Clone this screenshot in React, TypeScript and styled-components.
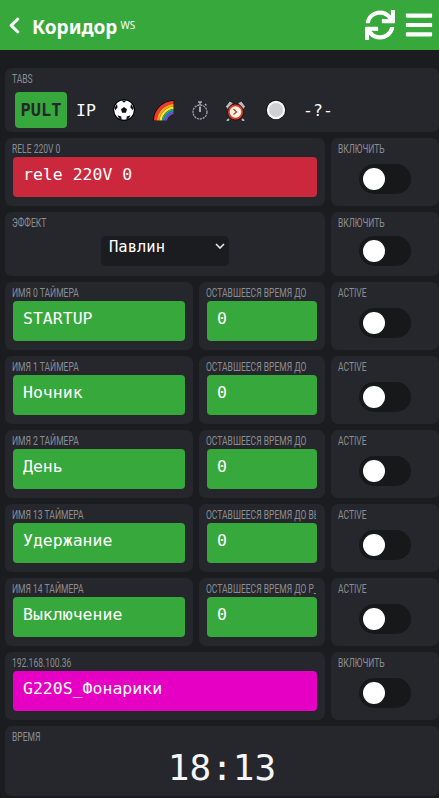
import React from "react";
import styled, { createGlobalStyle } from "styled-components";
import { FaChevronLeft, FaSync, FaBars } from "react-icons/fa";

const Global = createGlobalStyle`
  html, body { margin: 0; padding: 0; background: #1b1c20; overflow: hidden; }
  body { width: 439px; height: 798px; font-family: "Noto Sans", sans-serif; }
`;

const Page = styled.div`
  width: 439px;
  height: 798px;
  overflow: hidden;
`;

const Header = styled.header`
  height: 50px;
  background: #37a93c;
  display: flex;
  align-items: center;
  color: #fff;
  padding: 0 5px 0 5px;
`;

const Title = styled.h1`
  margin: 3px 0 0 8px;
  font-size: 19px;
  font-weight: 700;
  line-height: 26px;
`;

const Sup = styled.sup`
  display: inline-block;
  font-size: 10px;
  font-weight: 400;
  margin-left: 3px;
  vertical-align: 5px;
  line-height: 0;
`;

const HeaderIcons = styled.div`
  margin-left: auto;
  display: flex;
  align-items: center;
  gap: 9px;
`;

const Board = styled.main`
  display: grid;
  grid-template-columns: 188px 126px 108px;
  gap: 6px;
  padding: 18px 0 0 5px;
`;

const Card = styled.section<{ $span?: number; $h?: number }>`
  grid-column: span ${(p) => p.$span ?? 1};
  height: ${(p) => p.$h ?? 68}px;
  box-sizing: border-box;
  background: #26272c;
  border-radius: 7px;
  padding: 3px 8px 0;
  overflow: hidden;
`;

const Label = styled.div`
  font-family: "Roboto", sans-serif;
  font-size: 12px;
  line-height: 16px;
  height: 16px;
  color: #8b8d92;
  text-transform: uppercase;
  white-space: nowrap;
  margin-left: -1px;
  width: 140.8%;
  overflow: hidden;
  transform: scaleX(0.71);
  transform-origin: left center;
`;

const Value = styled.div<{ $bg: string }>`
  height: 40px;
  background: ${(p) => p.$bg};
  border-radius: 4px;
  font-family: "DejaVu Sans Mono", monospace;
  font-size: 16.5px;
  line-height: 35px;
  color: #fff;
  padding: 0 10px;
  white-space: pre;
`;

const Center = styled.div`
  display: flex;
  justify-content: center;
`;

const ToggleRow = styled(Center)<{ $top: number }>`
  padding-top: ${(p) => p.$top}px;
`;

const Track = styled.div`
  width: 52px;
  height: 30px;
  background: #17181a;
  border-radius: 15px;
  display: flex;
  align-items: center;
  padding-left: 4px;
  box-sizing: border-box;
`;

const Knob = styled.div`
  width: 22px;
  height: 22px;
  border-radius: 50%;
  background: #fff;
`;

const chevron =
  "data:image/svg+xml,%3Csvg xmlns='http://www.w3.org/2000/svg' width='10' height='6' viewBox='0 0 10 6'%3E%3Cpath d='M1 1l4 4 4-4' fill='none' stroke='%23e8e8e8' stroke-width='1.600'/%3E%3C/svg%3E";

const SelectBox = styled.select`
  appearance: none;
  width: 128px;
  height: 30px;
  margin-top: 5px;
  border: 0;
  border-radius: 5px;
  background: #1b1c20 url("${chevron}") no-repeat 114px 7px;
  color: #fff;
  font-family: "DejaVu Sans Mono", monospace;
  font-size: 15.5px;
  line-height: 20px;
  padding: 0 8px 9px;
  outline: none;
`;

const Tabs = styled.div`
  display: flex;
  height: 36px;
  margin: 5px 0 0 2px;
  align-items: center;
`;

const Tab = styled.div<{ $w: number; $active?: boolean }>`
  width: ${(p) => p.$w}px;
  height: 36px;
  display: flex;
  align-items: center;
  justify-content: center;
  border-radius: 4px;
  font-family: "DejaVu Sans Mono", monospace;
  font-size: ${(p) => (p.$active ? 17 : 16.5)}px;
  font-weight: ${(p) => (p.$active ? 700 : 400)};
  color: ${(p) => (p.$active ? "#26272c" : "#fff")};
  background: ${(p) => (p.$active ? "#37a93c" : "transparent")};
`;

const Clock = styled.div`
  font-family: "DejaVu Sans Mono", monospace;
  font-size: 36px;
  line-height: 44px;
  text-align: center;
  color: #f4f6f8;
  margin-top: 1px;
`;

const Toggle = ({ top = 7 }: { top?: number }) => (
  <ToggleRow $top={top}>
    <Track>
      <Knob />
    </Track>
  </ToggleRow>
);

const Ball = () => (
  <svg width="22" height="22" viewBox="0 0 22 22">
    <circle cx="11" cy="11" r="10.800" fill="#000" />
    <circle cx="11" cy="11" r="9.800" fill="#fff" />
    <path d="M11 8l3 2.200-1.100 3.600H9.100L8 10.200z" fill="#111" />
    <path d="M8.500 1.500h5L11 3.800zM1.700 8.500L4 5l.6 3.500-2.400 2.800zM20.300 8.500L18 5l-.6 3.500 2.400 2.800zM4.500 16.200l3.700 1.300.5 3-2.500-1zM17.500 16.200l-3.700 1.300-.5 3 2.500-1z" fill="#111" />
  </svg>
);

const Rainbow = () => (
  <svg width="21" height="21" viewBox="0 0 21 21">
    <path d="M0 21C0 9.500 9.500 0 21 0v10C15 10 10 15 10 21z" fill="#111" />
    <path d="M1 20.500C1 10 10 1 20.500 1v3C12 4 4 12 4 20.500z" fill="#ef3b2d" />
    <path d="M4 20.500C4 12 12 4 20.500 4v2.500C13.500 6.500 6.500 13.500 6.500 20.500z" fill="#f9a11b" />
    <path d="M6.500 20.500C6.500 13.500 13.500 6.500 20.500 6.500V9C15 9 9 15 9 20.500z" fill="#f7e03c" />
    <path d="M9 20.500C9 15 15 9 20.500 9v1.500C16 10.500 10.500 16 10.500 20.500z" fill="#3fb54a" />
    <path d="M10.500 20.500C10.500 16 16 10.500 20.500 10.500V12.500C17 12.500 12.500 17 12.500 20.500z" fill="#2a7de1" />
    <path d="M12.500 20.500C12.500 17 17 12.500 20.500 12.500V14C18 14 14 18 14 20.500z" fill="#8e44c9" />
  </svg>
);

const Stopwatch = () => (
  <svg width="16" height="19" viewBox="0 0 16 19" fill="none">
    <circle cx="8" cy="11" r="7" stroke="#9aa3ad" strokeWidth="1.300" strokeDasharray="2.200 0.800" />
    <path d="M8 11V5.500" stroke="#e8ecf0" strokeWidth="1.300" />
    <path d="M6 1h4M8 1v3M13 3l1.500 1.500" stroke="#aab2bb" strokeWidth="1.300" />
  </svg>
);

const Alarm = () => (
  <svg width="21" height="21" viewBox="0 0 21 21">
    <path d="M.5 6.500L4.500 1l4 2-6 6.500zM20.500 6.500L16.500 1l-4 2 6 6.500z" fill="#b3b8bd" stroke="#111" strokeWidth="0.800" />
    <path d="M4 19l-2 2M17 19l2 2" stroke="#b3b8bd" strokeWidth="2" />
    <circle cx="10.500" cy="12" r="8" fill="#e9381f" stroke="#111" strokeWidth="0.800" />
    <circle cx="10.500" cy="12" r="5.800" fill="#fbf4ec" />
    <path d="M8.500 9l3 3-3 2.500" fill="none" stroke="#c9371f" strokeWidth="1.300" />
  </svg>
);

const Record = () => (
  <svg width="20" height="20" viewBox="0 0 20 20">
    <circle cx="10" cy="10" r="10" fill="#0b0b0b" />
    <circle cx="10" cy="10" r="9.200" fill="#f4f5f7" />
    <circle cx="10" cy="10" r="7" fill="#cfd0d2" />
  </svg>
);

const timers = [
  ["ИМЯ 0 ТАЙМЕРА", "ОСТАВШЕЕСЯ ВРЕМЯ ДО", "STARTUP"],
  ["ИМЯ 1 ТАЙМЕРА", "ОСТАВШЕЕСЯ ВРЕМЯ ДО", "Ночник"],
  ["ИМЯ 2 ТАЙМЕРА", "ОСТАВШЕЕСЯ ВРЕМЯ ДО", "День"],
  ["ИМЯ 13 ТАЙМЕРА", "ОСТАВШЕЕСЯ ВРЕМЯ ДО ВЫ", "Удержание"],
  ["ИМЯ 14 ТАЙМЕРА", "ОСТАВШЕЕСЯ ВРЕМЯ ДО Р_", "Выключение"],
];

export default function App() {
  return (
    <Page>
      <Global />
      <Header>
        <FaChevronLeft size={19} />
        <Title>
          Коридор<Sup>WS</Sup>
        </Title>
        <HeaderIcons>
          <FaSync size={30} />
          <FaBars size={30} />
        </HeaderIcons>
      </Header>
      <Board>
        <Card $span={3} $h={64}>
          <Label>Tabs</Label>
          <Tabs>
            <Tab $w={52} $active>PULT</Tab>
            <Tab $w={38}>IP</Tab>
            <Tab $w={38}><Ball /></Tab>
            <Tab $w={40}><Rainbow /></Tab>
            <Tab $w={34}><Stopwatch /></Tab>
            <Tab $w={37}><Alarm /></Tab>
            <Tab $w={44}><Record /></Tab>
            <Tab $w={40}>-?-</Tab>
          </Tabs>
        </Card>

        <Card $span={2}>
          <Label>Rele 220V 0</Label>
          <Value $bg="#cb283d">rele 220V 0</Value>
        </Card>
        <Card>
          <Label>Включить</Label>
          <Toggle />
        </Card>

        <Card $span={2} $h={64}>
          <Label>Эффект</Label>
          <Center>
            <SelectBox defaultValue="Павлин">
              <option>Павлин</option>
            </SelectBox>
          </Center>
        </Card>
        <Card $h={64}>
          <Label>Включить</Label>
          <Toggle top={5} />
        </Card>

        {timers.map(([name, left, value]) => (
          <React.Fragment key={name}>
            <Card>
              <Label>{name}</Label>
              <Value $bg="#37a93c">{value}</Value>
            </Card>
            <Card>
              <Label>{left}</Label>
              <Value $bg="#37a93c">0</Value>
            </Card>
            <Card>
              <Label>Active</Label>
              <Toggle />
            </Card>
          </React.Fragment>
        ))}

        <Card $span={2}>
          <Label>192.168.100.36</Label>
          <Value $bg="#e600c4">G220S_Фонарики</Value>
        </Card>
        <Card>
          <Label>Включить</Label>
          <Toggle />
        </Card>

        <Card $span={3} $h={70}>
          <Label>Время</Label>
          <Clock>18:13</Clock>
        </Card>
      </Board>
    </Page>
  );
}
